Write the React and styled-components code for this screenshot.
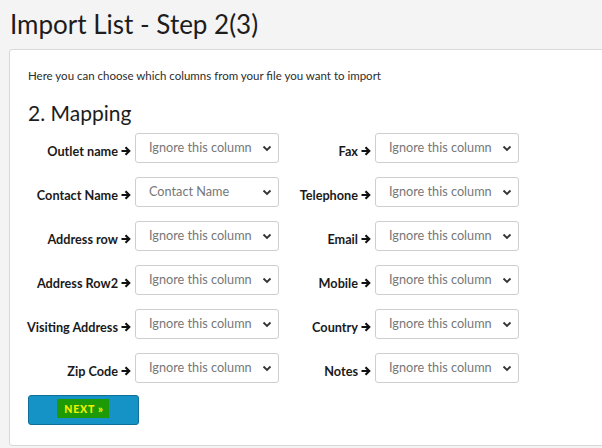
import React from "react";
import styled, { createGlobalStyle } from "styled-components";

const Global = createGlobalStyle`
  html, body { margin: 0; padding: 0; background: #f4f4f4; }
  body { font-family: Lato, "Open Sans", Arial, sans-serif; color: #222; }
`;

const Page = styled.div`
  width: 602px;
  height: 448px;
  overflow: hidden;
  padding: 6px 0 0 9px;
  box-sizing: border-box;
`;

const Title = styled.h1`
  margin: 0 0 0 1px;
  font-size: 26px;
  font-weight: 400;
  line-height: 36px;
  color: #1d1d1d;
  letter-spacing: 0;
`;

const Panel = styled.section`
  margin-top: 7px;
  width: 640px;
  height: 397px;
  background: #fff;
  border: 1px solid #d9d9d9;
  border-radius: 3px;
  box-sizing: border-box;
  padding: 18px 18px 0;
`;

const Intro = styled.p`
  margin: 0;
  font-size: 11.5px;
  line-height: 16px;
  color: #2c2c2c;
`;

const Heading = styled.h2`
  margin: 15px 0 0;
  font-size: 21px;
  font-weight: 400;
  line-height: 28px;
  color: #1d1d1d;
`;

const Grid = styled.div`
  margin-top: 6px;
  display: grid;
  grid-template-columns: 103px 144px 88px 144px;
  column-gap: 4px;
  row-gap: 14px;
  align-items: center;
`;

const Label = styled.label`
  justify-self: end;
  display: flex;
  align-items: center;
  gap: 3px;
  padding-top: 6px;
  font-size: 12.7px;
  font-weight: 700;
  color: #1a1a1a;
  white-space: nowrap;
`;

const SelectWrap = styled.div`
  position: relative;
  height: 30px;
`;

const Select = styled.select`
  appearance: none;
  -webkit-appearance: none;
  width: 100%;
  height: 100%;
  border: 1px solid #cfcfcf;
  border-radius: 3px;
  background: #fff;
  padding: 0 0 3px 13px;
  font-family: Lato, "Open Sans", Arial, sans-serif;
  font-size: 12.7px;
  color: #777;
  outline: none;
`;

const Chevron = styled.svg`
  position: absolute;
  right: 7px;
  top: 12px;
  pointer-events: none;
`;

const Button = styled.button`
  margin-top: 12px;
  width: 111px;
  height: 30px;
  background: #1593c7;
  border: 1px solid #0f6f97;
  border-radius: 3px;
  display: flex;
  align-items: center;
  justify-content: center;
  padding: 0 1px 4px 0;
`;

const ButtonText = styled.span`
  background: #1e9a06;
  color: #f2f200;
  font-family: Lato, Arial, sans-serif;
  font-weight: 900;
  font-size: 10.5px;
  line-height: 12px;
  letter-spacing: 0.8px;
  padding: 4px 5px 3px 7px;
`;

const Arrow = () => (
  <svg width="10" height="10" viewBox="0 0 10 10">
    <path d="M0.5 5h7.5M4.5 1.2 8.3 5 4.5 8.8" stroke="#111" strokeWidth="2.1" fill="none" />
  </svg>
);

const Field = ({ label, value }) => (
  <>
    <Label>
      {label}
      <Arrow />
    </Label>
    <SelectWrap>
      <Select defaultValue={value}>
        <option>{value}</option>
      </Select>
      <Chevron width="10" height="7" viewBox="0 0 10 7">
        <path d="M1.5 1.5 5 5 8.5 1.5" stroke="#333" strokeWidth="1.8" fill="none" />
      </Chevron>
    </SelectWrap>
  </>
);

const rows = [
  ["Outlet name", "Ignore this column", "Fax", "Ignore this column"],
  ["Contact Name", "Contact Name", "Telephone", "Ignore this column"],
  ["Address row", "Ignore this column", "Email", "Ignore this column"],
  ["Address Row2", "Ignore this column", "Mobile", "Ignore this column"],
  ["Visiting Address", "Ignore this column", "Country", "Ignore this column"],
  ["Zip Code", "Ignore this column", "Notes", "Ignore this column"],
];

export default function App() {
  return (
    <>
      <Global />
      <Page>
        <Title>Import List - Step 2(3)</Title>
        <Panel>
          <Intro>Here you can choose which columns from your file you want to import</Intro>
          <Heading>2. Mapping</Heading>
          <Grid>
            {rows.map(([l1, v1, l2, v2]) => (
              <React.Fragment key={l1}>
                <Field label={l1} value={v1} />
                <Field label={l2} value={v2} />
              </React.Fragment>
            ))}
          </Grid>
          <Button>
            <ButtonText>NEXT »</ButtonText>
          </Button>
        </Panel>
      </Page>
    </>
  );
}
